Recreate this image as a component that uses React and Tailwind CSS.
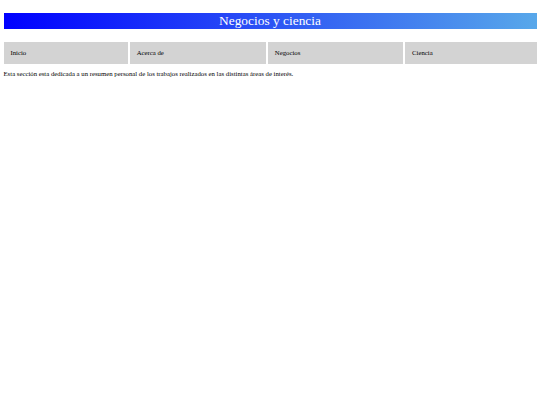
import React from "react";

const links = ["Inicio", "Acerca de", "Negocios", "Ciencia"];

export default function App() {
  return (
    <div
      className="min-h-[405px] bg-white px-[3.5px] pt-[13px] text-black"
      style={{ fontFamily: '"Liberation Serif", "Times New Roman", serif' }}
    >
      {/* Title bar */}
      <div className="flex h-[16px] items-center justify-center bg-[linear-gradient(to_right,#0000ff,#58a8ea)]">
        <h1 className="text-[13.4px] leading-none font-normal text-white">
          Negocios y ciencia
        </h1>
      </div>

      {/* Navigation */}
      <nav className="mt-[13px] grid grid-cols-[124fr_136fr_135fr_131fr] gap-[1.7px]">
        {links.map((link) => (
          <div
            key={link}
            className="flex h-[22px] items-center bg-[#d3d3d3] pl-[7px] text-[6.75px] text-black"
          >
            {link}
          </div>
        ))}
      </nav>

      <p className="mt-[5px] text-[6.75px] leading-[9px] text-black">
        Esta sección esta dedicada a un resumen personal de los trabajos
        realizados en las distintas áreas de interés.
      </p>
    </div>
  );
}
